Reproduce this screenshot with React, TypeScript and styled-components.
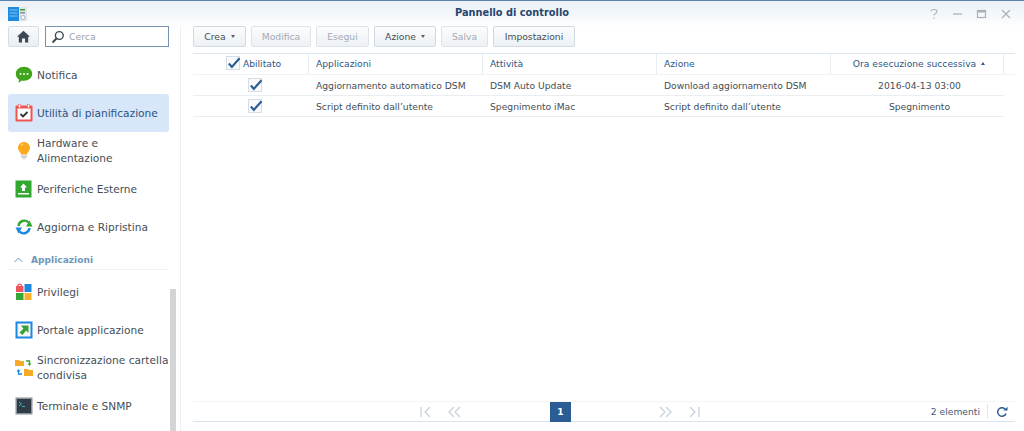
import styled, { createGlobalStyle } from "styled-components";
import type { ReactNode } from "react";

const GlobalStyle = createGlobalStyle`
  html, body {
    margin: 0;
    padding: 0;
    background: #fff;
    font-family: "DejaVu Sans", Verdana, sans-serif;
    font-size: 9.2px;
  }
  * {
    box-sizing: border-box;
  }
`;

const IconNotifica = () => (
  <svg width="18" height="18" viewBox="0 0 18 18">
    <path d="M9 .8c4.700 0 8.200 3 8.200 7s-3.500 7-8.200 7c-.8 0-1.500-.1-2.200-.3L3.500 17l.6-3.300C2 12.400.8 10.300.8 7.800c0-4 3.500-7 8.200-7z" fill="#3fa51c" />
    <circle cx="5.500" cy="8" r="1" fill="#fff" />
    <circle cx="9" cy="8" r="1" fill="#fff" />
    <circle cx="12.500" cy="8" r="1" fill="#fff" />
  </svg>
);

const IconCalendar = () => (
  <svg width="18" height="18" viewBox="0 0 18 18">
    <rect x=".5" y="1.500" width="17" height="16" rx="1" fill="#f0564f" />
    <rect x="2.500" y="4.500" width="13" height="11" fill="#fff" />
    <rect x="3.500" y=".5" width="2" height="3" fill="#fff" stroke="#f0564f" strokeWidth=".5" />
    <rect x="12.500" y=".5" width="2" height="3" fill="#fff" stroke="#f0564f" strokeWidth=".5" />
    <path d="M5.500 10l2.500 2.500 4.500-4.500" fill="none" stroke="#333" strokeWidth="1.800" />
  </svg>
);

const IconBulb = () => (
  <svg width="18" height="20" viewBox="0 0 18 20">
    <path d="M9 1c3.300 0 6 2.500 6 5.700 0 2.500-1.700 3.700-2.600 5.300-.3.500-.4 1-.4 1.500H6c0-.5-.1-1-.4-1.500C4.700 10.400 3 9.200 3 6.700 3 3.500 5.700 1 9 1z" fill="#fba91f" />
    <path d="M6 4.500C6.500 3.500 7.500 3 8.500 3" fill="none" stroke="#ffe0a0" strokeWidth="1.200" />
    <rect x="6" y="14.500" width="6" height="1" fill="#b5b5b5" />
    <rect x="6.500" y="16" width="5" height="1" fill="#c8c8c8" />
    <rect x="7.500" y="17.500" width="3" height="1" fill="#d5d5d5" />
  </svg>
);

const IconUpload = () => (
  <svg width="18" height="18" viewBox="0 0 18 18">
    <rect x=".5" y=".5" width="16" height="17" fill="#31a82e" />
    <path d="M8.500 3.500l3.500 4H10v3.500H7V7.500H5z" fill="#fff" />
    <rect x="3" y="13" width="11" height="1.500" fill="#fff" />
  </svg>
);

const IconUpdate = () => (
  <svg width="18" height="18" viewBox="0 0 18 18">
    <path d="M3.500 8A5.800 5.800 0 0 1 13.500 4.500" fill="none" stroke="#31a82e" strokeWidth="2.400" />
    <path d="M11 8.500h6.500L14.500 2.500z" fill="#31a82e" />
    <path d="M14.500 10A5.800 5.800 0 0 1 4.500 13.500" fill="none" stroke="#1b87e0" strokeWidth="2.400" />
    <path d="M.5 9.500H7L3.500 15.500z" fill="#1b87e0" />
  </svg>
);

const IconPrivilegi = () => (
  <svg width="18" height="18" viewBox="0 0 18 18">
    <path d="M2.800 3.500a2 2.300 0 0 1 4 0" fill="none" stroke="#ee5560" strokeWidth="1.200" />
    <rect x="1" y="3" width="7.500" height="6" fill="#ee5560" />
    <rect x="9.500" y="1" width="7" height="8" fill="#1b87e0" />
    <rect x="1" y="10" width="7.500" height="7" fill="#34a63a" />
    <rect x="9.500" y="10" width="7" height="7" fill="#fbb02d" />
  </svg>
);

const IconPortale = () => (
  <svg width="18" height="18" viewBox="0 0 18 18">
    <rect x=".5" y=".5" width="17" height="17" fill="#1b87e0" />
    <rect x="2.500" y="2.500" width="13" height="13" fill="#f4f6f8" />
    <path d="M6 4.500h7.500V12l-2.400-2.400-3.600 4.400-3-2.500 3.900-3.800z" fill="#37a334" />
  </svg>
);

const IconSync = () => (
  <svg width="18" height="20" viewBox="0 0 18 20">
    <path d="M0 2h4l1 1h4v5H0z" fill="#f5ab25" />
    <path d="M9 11h4l1 1h4v6H9z" fill="#f5ab25" />
    <path d="M11 3h3.500v3" fill="none" stroke="#37a334" strokeWidth="1.300" />
    <path d="M12.500 5.500h4l-2 2.500z" fill="#37a334" />
    <path d="M7 16H3.500v-3" fill="none" stroke="#1b87e0" strokeWidth="1.300" />
    <path d="M1.500 13.500h4l-2-2.500z" fill="#1b87e0" />
  </svg>
);

const IconTerminal = () => (
  <svg width="18" height="18" viewBox="0 0 18 18">
    <rect x=".5" y=".5" width="17" height="17" fill="#8a9299" />
    <rect x="2" y="2" width="14" height="14" fill="#2f3c46" />
    <path d="M4 5l2.500 2L4 9" fill="none" stroke="#4bc0c8" strokeWidth=".9" />
    <path d="M7 9.500h3" stroke="#4bc0c8" strokeWidth=".9" />
  </svg>
);

const IconHome = () => (
  <svg width="13" height="13" viewBox="0 0 13 13">
    <path d="M6.500.8L13 6.800h-1.800V12.500H8V8.500H5v4H1.800V6.800H0z" fill="#3d4a55" />
  </svg>
);

const IconSearch = () => (
  <svg width="14" height="14" viewBox="0 0 14 14">
    <circle cx="8.300" cy="5.500" r="3.900" fill="none" stroke="#3d4a55" strokeWidth="1.400" />
    <path d="M5.500 8.500L1.500 12.500" stroke="#3d4a55" strokeWidth="1.900" />
  </svg>
);

const IconCheck = () => (
  <svg width="14" height="12" viewBox="0 0 16 14">
    <path d="M2 7.500l3.500 4L14.500 1.500" fill="none" stroke="#2b5c93" strokeWidth="2.500" />
  </svg>
);

const AppLogo = () => (
  <svg width="20" height="16" viewBox="0 0 20 16">
    <rect x="0" y="1" width="11" height="14" fill="#1f8be0" />
    <path d="M1.500 4h8M1.500 7h8M1.500 10h8" stroke="#7cc4f5" strokeWidth="1" />
    <rect x="11" y="1" width="8" height="14" fill="#dfe5ea" />
    <rect x="12" y="3" width="5" height="1.500" fill="#37a334" />
    <rect x="12" y="6" width="5" height="1.500" fill="#8a9299" />
    <circle cx="15" cy="11.500" r="2" fill="#fff" stroke="#aab4bc" />
  </svg>
);

const Pager = ({ d }: { d: string }) => (
  <svg width="14" height="12" viewBox="0 0 14 12">
    <path d={d} fill="none" stroke="#c4d0dc" strokeWidth="1.200" />
  </svg>
);

const Window = styled.div`
  width: 1024px;
  height: 431px;
  display: flex;
  flex-direction: column;
  overflow: hidden;
  border-top: 1px solid #5b82ab;
  background: #fff;
`;

const TitleBar = styled.div`
  height: 25px;
  flex: none;
  display: flex;
  align-items: center;
  justify-content: space-between;
  padding: 0 8px;
  position: relative;
  background: linear-gradient(#eaf0f6, #fdfeff);
`;

const Title = styled.div`
  position: absolute;
  left: 0;
  right: 0;
  top: 6px;
  text-align: center;
  font-size: 9.8px;
  font-weight: 700;
  color: #24456e;
`;

const WinButtons = styled.div`
  display: flex;
  margin-right: 4px;
`;

const Body = styled.div`
  flex: 1;
  display: flex;
  min-height: 0;
`;

const Sidebar = styled.aside`
  width: 181px;
  flex: none;
  position: relative;
  overflow: hidden;
  padding: 0 11px 0 8px;
  border-right: 1px solid #eef1f4;
`;

const Scrollbar = styled.div`
  position: absolute;
  left: 170px;
  top: 263px;
  bottom: 0;
  width: 6px;
  background: #d2d4d6;
`;

const SearchRow = styled.div`
  display: flex;
  gap: 6px;
  margin-bottom: 9px;
  height: 21px;
`;

const HomeButton = styled.button`
  width: 31px;
  height: 21px;
  padding: 0;
  display: flex;
  align-items: center;
  justify-content: center;
  border: 1px solid #d5dee7;
  border-radius: 2px;
  background: linear-gradient(#f9fbfc, #e9eef3);
`;

const SearchBox = styled.div`
  flex: 1;
  display: flex;
  align-items: center;
  gap: 4px;
  padding-left: 5px;
  border: 1px solid #7594b5;
  background: #fff;
  font-size: 9.3px;
  color: #9aa3ab;
`;

const NavItem = styled.div<{ $active?: boolean }>`
  height: 38px;
  display: flex;
  align-items: center;
  gap: 4px;
  padding-left: 7px;
  border-radius: 3px;
  font-size: 10.6px;
  line-height: 15px;
  white-space: nowrap;
  color: ${(p) => (p.$active ? "#2a5384" : "#444e57")};
  background: ${(p) => (p.$active ? "#d7e6f8" : "transparent")};
`;

const NavIcon = styled.span`
  width: 18px;
  flex: none;
  display: flex;
  justify-content: center;
`;

const SectionHead = styled.div`
  height: 24px;
  margin-bottom: 3px;
  display: flex;
  align-items: center;
  gap: 8px;
  padding: 4px 0 0 6px;
  border-bottom: 1px solid #eef1f4;
  font-size: 9.1px;
  font-weight: 700;
  color: #6d97bc;
`;

const Main = styled.main`
  flex: 1;
  min-width: 0;
  display: flex;
  flex-direction: column;
  padding: 0 9px 9px 12px;
`;

const Toolbar = styled.div`
  display: flex;
  gap: 5px;
  height: 21px;
  margin-bottom: 6px;
`;

const ToolButton = styled.button<{ $w: number; $off?: boolean }>`
  width: ${(p) => p.$w}px;
  padding: 0;
  border: 1px solid ${(p) => (p.$off ? "#dde4ea" : "#d0dae3")};
  border-radius: 2px;
  font-family: inherit;
  font-size: 9.2px;
  color: ${(p) => (p.$off ? "#a3abb2" : "#444e57")};
  background: linear-gradient(#fbfcfd, #edf1f5);
`;

const Caret = styled.span`
  display: inline-block;
  margin-left: 5px;
  vertical-align: 2px;
  border-left: 2.500px solid transparent;
  border-right: 2.500px solid transparent;
  border-top: 3px solid #555f68;
`;

const SortCaret = styled(Caret)`
  transform: rotate(180deg);
  border-top-color: #2d5787;
`;

const TableHead = styled.div`
  height: 22px;
  flex: none;
  display: flex;
  border-top: 1px solid #dbe6f0;
  border-bottom: 1px solid #f0f3f6;
  font-size: 9.2px;
  color: #2d5787;
`;

const HeadCell = styled.div<{ $w: number; $center?: boolean; $shift?: number }>`
  width: ${(p) => p.$w}px;
  flex: none;
  display: flex;
  align-items: center;
  justify-content: ${(p) => (p.$center ? "center" : "flex-start")};
  padding-left: ${(p) => (p.$center ? p.$shift ?? 0 : 7)}px;
  padding-bottom: 2px;
  border-right: 1px solid #e6edf3;
`;

const HeadCheck = styled.span`
  margin-right: 3px;
  display: flex;
`;

const CheckBox = styled.span`
  position: relative;
  display: block;
  width: 14px;
  height: 14px;
  border: 1px solid #d5dde5;
  background: #f7f9fb;
  svg {
    position: absolute;
    left: 0;
    top: 0;
  }
`;

const Row = styled.div`
  height: 21px;
  width: 811px;
  flex: none;
  display: flex;
  border-bottom: 1px solid #e9eef3;
  font-size: 9.2px;
  color: #444e57;
`;

const Cell = styled.div<{ $w: number; $center?: boolean; $shift?: number }>`
  width: ${(p) => p.$w}px;
  flex: none;
  display: flex;
  align-items: center;
  justify-content: ${(p) => (p.$center ? "center" : "flex-start")};
  padding-left: ${(p) => (p.$center ? p.$shift ?? 0 : 7)}px;
  white-space: nowrap;
`;

const Spacer = styled.div`
  flex: 1;
`;

const Footer = styled.div`
  height: 21px;
  flex: none;
  position: relative;
  display: flex;
  align-items: center;
  justify-content: flex-end;
  border-top: 1px solid #f3f4f6;
  border-bottom: 1px solid #d7e3ee;
  font-size: 9.2px;
  color: #3d5a7d;
`;

const PagerGroup = styled.div`
  position: absolute;
  left: 226px;
  top: 0;
  bottom: 0;
  width: 282px;
  display: flex;
  align-items: center;
  justify-content: space-between;
`;

const PagerSide = styled.div`
  display: flex;
  gap: 14px;
`;

const PageNumber = styled.div`
  width: 21px;
  height: 20px;
  margin-left: 1px;
  display: flex;
  align-items: center;
  justify-content: center;
  background: #2b5c93;
  color: #fff;
  font-size: 9px;
  font-weight: 700;
`;

const Count = styled.span`
  padding-right: 7px;
  height: 15px;
  line-height: 15px;
  border-right: 1px solid #e2e8ee;
`;

const Refresh = styled.span`
  display: flex;
  width: 27px;
  justify-content: center;
`;

const cols = [116, 174, 174, 174, 173];

type Item = { icon: ReactNode; label: ReactNode; active?: boolean };

const topItems: Item[] = [
  { icon: <IconNotifica />, label: "Notifica" },
  { icon: <IconCalendar />, label: "Utilità di pianificazione", active: true },
  { icon: <IconBulb />, label: <>Hardware e<br />Alimentazione</> },
  { icon: <IconUpload />, label: "Periferiche Esterne" },
  { icon: <IconUpdate />, label: "Aggiorna e Ripristina" },
];

const appItems: Item[] = [
  { icon: <IconPrivilegi />, label: "Privilegi" },
  { icon: <IconPortale />, label: "Portale applicazione" },
  { icon: <IconSync />, label: <>Sincronizzazione cartella<br />condivisa</> },
  { icon: <IconTerminal />, label: "Terminale e SNMP" },
];

const rows = [
  ["Aggiornamento automatico DSM", "DSM Auto Update", "Download aggiornamento DSM", "2016-04-13 03:00"],
  ["Script definito dall’utente", "Spegnimento iMac", "Script definito dall’utente", "Spegnimento"],
];

const renderItem = (item: Item, index: number) => (
  <NavItem key={index} $active={item.active}>
    <NavIcon>{item.icon}</NavIcon>
    <span>{item.label}</span>
  </NavItem>
);

const App = () => {
  return (
    <>
      <GlobalStyle />
      <Window>
        <TitleBar>
          <AppLogo />
          <Title>Pannello di controllo</Title>
          <WinButtons>
            <svg width="82" height="12" viewBox="0 0 82 12">
              <path d="M1 3c.5-2 6-2 6 .5 0 2-3 2-3 4M4 9.500v1.500" fill="none" stroke="#a9b2ba" strokeWidth="1.100" />
              <path d="M23 6h9" stroke="#a9b2ba" strokeWidth="1.300" />
              <rect x="47.500" y="2.500" width="8" height="7" fill="none" stroke="#a9b2ba" strokeWidth="1.200" />
              <path d="M47.500 3.500h8" stroke="#a9b2ba" strokeWidth="2" />
              <path d="M72 2l8 8M80 2l-8 8" stroke="#a9b2ba" strokeWidth="1.100" />
            </svg>
          </WinButtons>
        </TitleBar>
        <Body>
          <Sidebar>
            <SearchRow>
              <HomeButton><IconHome /></HomeButton>
              <SearchBox>
                <IconSearch />
                <span>Cerca</span>
              </SearchBox>
            </SearchRow>
            {topItems.map(renderItem)}
            <SectionHead>
              <svg width="9" height="6" viewBox="0 0 9 6">
                <path d="M.5 5l4-4 4 4" fill="none" stroke="#6d97bc" strokeWidth="1" />
              </svg>
              Applicazioni
            </SectionHead>
            {appItems.map(renderItem)}
            <Scrollbar />
          </Sidebar>
          <Main>
            <Toolbar>
              <ToolButton $w={53}>Crea<Caret /></ToolButton>
              <ToolButton $w={60} $off>Modifica</ToolButton>
              <ToolButton $w={53} $off>Esegui</ToolButton>
              <ToolButton $w={62}>Azione<Caret /></ToolButton>
              <ToolButton $w={47} $off>Salva</ToolButton>
              <ToolButton $w={82}>Impostazioni</ToolButton>
            </Toolbar>
            <TableHead>
              <HeadCell $w={cols[0]} $center $shift={6}>
                <HeadCheck>
                  <CheckBox><IconCheck /></CheckBox>
                </HeadCheck>
                Abilitato
              </HeadCell>
              <HeadCell $w={cols[1]}>Applicazioni</HeadCell>
              <HeadCell $w={cols[2]}>Attività</HeadCell>
              <HeadCell $w={cols[3]}>Azione</HeadCell>
              <HeadCell $w={cols[4]} $center $shift={4}>
                Ora esecuzione successiva
                <SortCaret />
              </HeadCell>
            </TableHead>
            {rows.map((row) => (
              <Row key={row[0]}>
                <Cell $w={cols[0]} $center $shift={8}>
                  <CheckBox><IconCheck /></CheckBox>
                </Cell>
                <Cell $w={cols[1]}>{row[0]}</Cell>
                <Cell $w={cols[2]}>{row[1]}</Cell>
                <Cell $w={cols[3]}>{row[2]}</Cell>
                <Cell $w={cols[4]} $center $shift={4}>{row[3]}</Cell>
              </Row>
            ))}
            <Spacer />
            <Footer>
              <PagerGroup>
                <PagerSide>
                  <Pager d="M2 1v10M11 1L6 6l5 5" />
                  <Pager d="M7 1L2 6l5 5M13 1L8 6l5 5" />
                </PagerSide>
                <PageNumber>1</PageNumber>
                <PagerSide>
                  <Pager d="M1 1l5 5-5 5M7 1l5 5-5 5" />
                  <Pager d="M3 1l5 5-5 5M12 1v10" />
                </PagerSide>
              </PagerGroup>
              <Count>2 elementi</Count>
              <Refresh>
                <svg width="12" height="12" viewBox="0 0 12 12">
                  <path d="M9.800 4A4.300 4.300 0 1 0 10 7.500" fill="none" stroke="#2b5c93" strokeWidth="1.500" />
                  <path d="M7.500 4.500H11.500V.8z" fill="#2b5c93" />
                </svg>
              </Refresh>
            </Footer>
          </Main>
        </Body>
      </Window>
    </>
  );
};

export default App;
